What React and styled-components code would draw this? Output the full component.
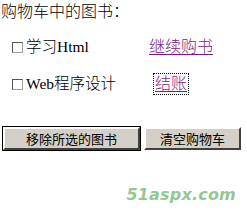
import React from 'react';
import styled, { createGlobalStyle } from 'styled-components';

const GlobalStyle = createGlobalStyle`
  html, body {
    margin: 0;
    padding: 0;
    background: #ffffff;
  }
  body {
    font-family: "Liberation Serif", "Noto Sans CJK SC", serif;
    color: #000000;
  }
`;

const Page = styled.div`
  width: 247px;
  height: 222px;
  box-sizing: border-box;
  padding: 3px 0 0 1px;
  display: flex;
  flex-direction: column;
`;

const Title = styled.div`
  font-size: 16px;
  line-height: 18px;
  height: 18px;
  font-weight: 300;
`;

const Cart = styled.div`
  display: grid;
  grid-template-columns: 146px auto;
  grid-auto-rows: 37px;
  margin-top: 17px;
  align-items: start;
`;

const Item = styled.label`
  display: flex;
  align-items: center;
  gap: 3px;
  padding-left: 11px;
  font-size: 15.5px;
  line-height: 18px;
  font-weight: 300;
`;

const Box = styled.input`
  appearance: none;
  margin: 0;
  width: 11px;
  height: 11px;
  box-sizing: border-box;
  border: 1px solid #555555;
  border-right-color: #a0a0a0;
  border-bottom-color: #a0a0a0;
  background: #ffffff;
`;

const Link = styled.a`
  font-size: 16px;
  line-height: 18px;
  font-weight: 300;
  color: #7a1b80;
  text-decoration: underline;
  text-underline-offset: 2px;
  margin-left: ${({ $shift }) => $shift || 0}px;
  justify-self: start;
  outline: ${({ $focus }) => ($focus ? '1px dotted #000000' : 'none')};
  outline-offset: 1px;
`;

const Buttons = styled.div`
  display: flex;
  gap: 4px;
  margin-top: 15px;
  padding-left: 2px;
`;

const Button = styled.button`
  width: ${({ $w }) => $w}px;
  height: 23px;
  margin: 0;
  padding: 0;
  font-family: "Noto Sans CJK SC", sans-serif;
  font-size: 13px;
  line-height: 17px;
  color: #000000;
  background: #d4d0c8;
  box-sizing: border-box;
  border: 2px solid;
  border-color: #ffffff #404040 #404040 #ffffff;
  box-shadow: ${({ $active }) => ($active ? '0 0 0 1px #000000' : 'none')};
`;

const Watermark = styled.div`
  align-self: flex-end;
  margin: 35px 11px 0 0;
  font-family: "DejaVu Sans", sans-serif;
  font-weight: bold;
  font-style: italic;
  font-size: 16px;
  color: #92c992;
  letter-spacing: 0.2px;
`;

export default function App() {
  return (
    <>
      <GlobalStyle />
      <Page>
        <Title>购物车中的图书：</Title>
        <Cart>
          <Item>
            <Box type="checkbox" />
            学习Html
          </Item>
          <Link href="#" $shift={2}>继续购书</Link>
          <Item>
            <Box type="checkbox" />
            Web程序设计
          </Item>
          <Link href="#" $shift={8} $focus>结账</Link>
        </Cart>
        <Buttons>
          <Button $w={137} $active>移除所选的图书</Button>
          <Button $w={97}>清空购物车</Button>
        </Buttons>
        <Watermark>51aspx.com</Watermark>
      </Page>
    </>
  );
}
